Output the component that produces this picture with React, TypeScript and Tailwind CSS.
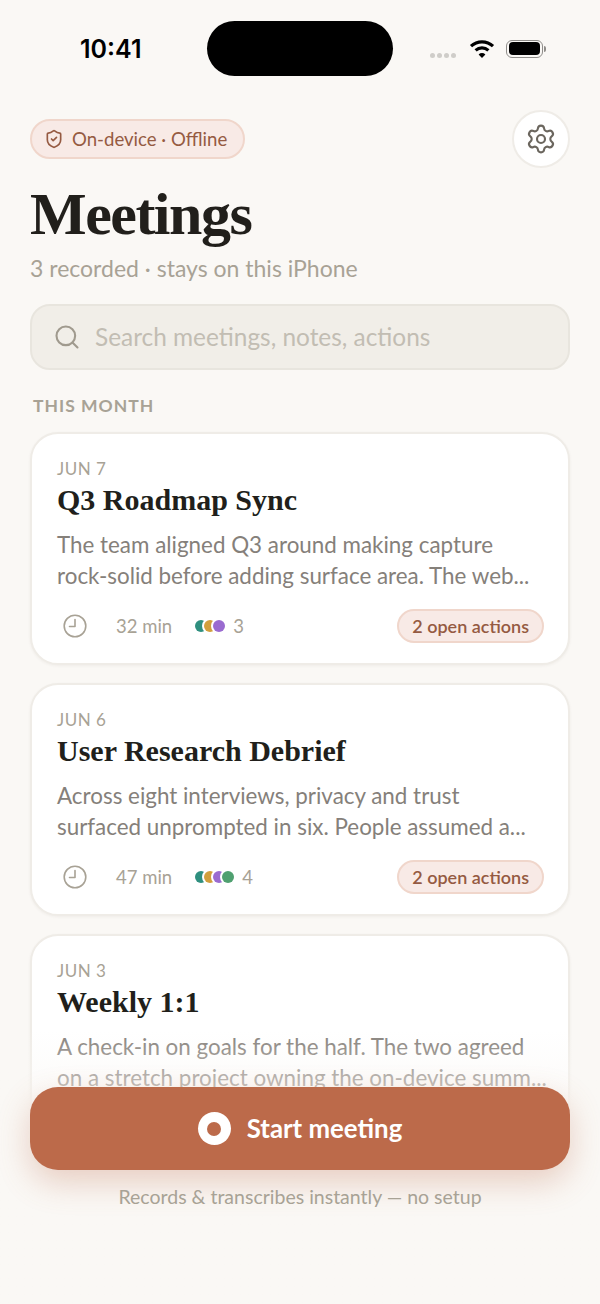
import { Search, Settings, ShieldCheck } from 'lucide-react';

interface Meeting {
  date: string;
  title: string;
  lines: string[];
  duration?: string;
  dots?: string[];
  people?: number;
}

const meetings: Meeting[] = [
  {
    date: 'JUN 7',
    title: 'Q3 Roadmap Sync',
    lines: ['The team aligned Q3 around making capture', 'rock-solid before adding surface area. The web...'],
    duration: '32 min',
    dots: ['bg-[#2f8f7f]', 'bg-[#d19f3c]', 'bg-[#9a6bd0]'],
    people: 3,
  },
  {
    date: 'JUN 6',
    title: 'User Research Debrief',
    lines: ['Across eight interviews, privacy and trust', 'surfaced unprompted in six. People assumed a...'],
    duration: '47 min',
    dots: ['bg-[#2f8f7f]', 'bg-[#d19f3c]', 'bg-[#9a6bd0]', 'bg-[#4fa070]'],
    people: 4,
  },
  {
    date: 'JUN 3',
    title: 'Weekly 1:1',
    lines: ['A check-in on goals for the half. The two agreed', 'on a stretch project owning the on-device summ...'],
  },
];

function ClockIcon() {
  return (
    <svg width="24" height="24" viewBox="0 0 24 24" fill="none" stroke="#a8a295" strokeWidth="1.6" strokeLinecap="round" strokeLinejoin="round">
      <circle cx="12" cy="12" r="10.8" />
      <path d="M12 5.5V12.5H6.5" />
    </svg>
  );
}

function StatusIcons() {
  return (
    <div className="flex items-center pl-[37px] pt-[18px]">
      <div className="mt-[14px] flex gap-[2px]">
        {[0, 1, 2, 3].map((i) => (
          <span key={i} className="h-[5px] w-[5px] rounded-full bg-[#cfcdc9]" />
        ))}
      </div>
      <svg className="ml-[13px]" width="26" height="19" viewBox="0 0 26 19" fill="none" stroke="#000" strokeWidth="3.2">
        <path d="M2 7.2C8.2 1.4 17.8 1.4 24 7.2" />
        <path d="M6.6 11.4C10.3 8 15.7 8 19.4 11.4" />
        <path d="M13 19L9.6 15.4C11.6 13.6 14.4 13.6 16.4 15.4Z" fill="#000" stroke="none" />
      </svg>
      <div className="ml-[11px] flex items-center gap-[1px]">
        <div className="flex h-[18px] w-[37px] items-center justify-center rounded-[6px] border border-[#8f8d8a]">
          <div className="h-[13px] w-[31px] rounded-[4px] bg-black" />
        </div>
        <div className="h-[6px] w-[2px] rounded-r-full bg-[#8f8d8a]" />
      </div>
    </div>
  );
}

function MeetingCard({ meeting }: { meeting: Meeting }) {
  return (
    <div className="h-[233px] rounded-[28px] border-2 border-[#efece7] bg-white pl-[25px] pr-[24px] pt-[24px] shadow-[0_1px_3px_rgba(60,50,40,0.06)]">
      <div className="text-[17px] leading-[22px] tracking-[0.5px] text-[#a8a295]">{meeting.date}</div>
      <h2 className="mt-[1px] font-['Liberation_Serif',serif] text-[30px] leading-[38px] font-bold text-[#211f1b]">{meeting.title}</h2>
      <div className="mt-[10px] text-[22.4px] leading-[31px] whitespace-nowrap text-[#85807a]">
        {meeting.lines.map((line) => (
          <p key={line}>{line}</p>
        ))}
      </div>
      {meeting.duration && (
        <div className="mt-[18px] flex items-center">
          <div className="ml-[6px]">
            <ClockIcon />
          </div>
          <span className="ml-[29px] text-[18.5px] leading-[24px] text-[#a8a295]">{meeting.duration}</span>
          <div className="ml-[23px] flex">
            {meeting.dots?.map((dot) => (
              <span key={dot} className={`-ml-[3px] h-3 w-3 rounded-full ring-2 ring-white first:ml-0 ${dot}`} />
            ))}
          </div>
          <span className="ml-[8px] text-[18.5px] leading-[24px] text-[#a8a295]">{meeting.people}</span>
          <div className="ml-auto flex h-[34px] items-center rounded-full border-2 border-[#f0d6cb] bg-[#f8eae6] px-[13px] text-[18px] font-semibold text-[#955a42]">
            2 open actions
          </div>
        </div>
      )}
    </div>
  );
}

export default function App() {
  return (
    <div className="relative h-[1304px] w-[600px] overflow-hidden bg-[#faf8f5] font-['Lato',sans-serif]">
      {/* status bar */}
      <div className="flex h-[110px] items-start pt-[21px]">
        <div className="w-[207px] pl-[80px] pt-[11px] font-['Inter',sans-serif] text-[25px] leading-[34px] font-semibold text-black">10:41</div>
        <div className="h-[55px] w-[186px] rounded-full bg-black" />
        <StatusIcons />
      </div>

      <div className="px-[30px]">
        <div className="flex items-center justify-between">
          <div className="flex h-[40px] w-[215px] items-center gap-[8px] rounded-full border-2 border-[#f0d6cb] bg-[#f8eae6] pl-[12px] text-[18.6px] text-[#955a42]">
            <ShieldCheck size={20} strokeWidth={2} />
            <span className="pt-[2px]">On-device · Offline</span>
          </div>
          <div className="flex h-[58px] w-[58px] items-center justify-center rounded-full border-2 border-[#efece7] bg-white">
            <Settings size={32} strokeWidth={1.6} className="text-[#6b665e]" />
          </div>
        </div>

        <h1 className="mt-[11px] font-['Liberation_Serif',serif] text-[60px] leading-[70px] font-bold tracking-[-1.5px] text-[#211f1b]">Meetings</h1>
        <p className="mt-[4px] text-[23px] leading-[30px] text-[#a8a295]">3 recorded · stays on this iPhone</p>

        <div className="mt-[21px] flex h-[66px] items-center rounded-[20px] border-2 border-[#e8e5de] bg-[#f1eee8] pl-[21px]">
          <Search size={28} strokeWidth={1.8} className="text-[#a09a8e]" />
          <span className="ml-[14px] text-[24.4px] text-[#c2bdb3]">Search meetings, notes, actions</span>
        </div>

        <div className="mt-[25px] pl-[3px] text-[17.5px] leading-[22px] font-bold tracking-[1px] text-[#a8a295]">THIS MONTH</div>

        <div className="mt-[15px] flex flex-col gap-[18px]">
          {meetings.map((meeting) => (
            <MeetingCard key={meeting.date} meeting={meeting} />
          ))}
        </div>
      </div>

      {/* fade and start button over the list */}
      <div className="absolute inset-x-0 bottom-0 h-[274px] bg-gradient-to-b from-[#faf8f5]/0 via-[#faf8f5]/50 via-20% to-[#faf8f5] to-30%">
        <div className="px-[30px] pt-[57px]">
          <button className="flex h-[83px] w-full items-center justify-center gap-[16px] rounded-[28px] bg-[#bc6a4a] text-[25.8px] font-bold text-white shadow-[0_12px_32px_rgba(188,106,74,0.3)]">
            <span className="flex h-[33px] w-[33px] items-center justify-center rounded-full bg-white">
              <span className="h-[14px] w-[14px] rounded-full bg-[#bc6a4a]" />
            </span>
            Start meeting
          </button>
          <p className="mt-[16px] text-center text-[19.5px] leading-[22px] text-[#a8a295]">Records &amp; transcribes instantly — no setup</p>
        </div>
      </div>
    </div>
  );
}
